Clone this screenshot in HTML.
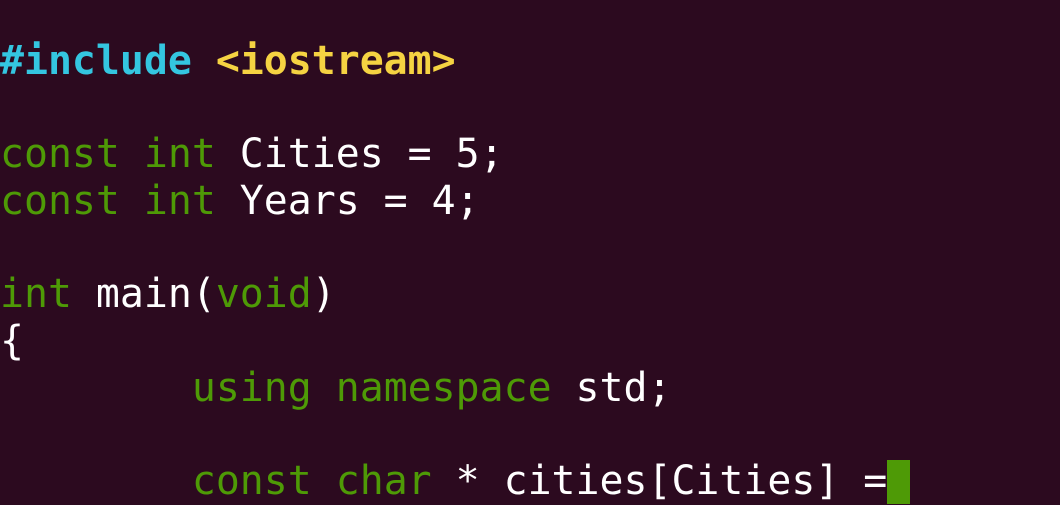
<!DOCTYPE html>
<html><head><meta charset="utf-8"><style>
html,body{margin:0;padding:0;background:#2c0a1f;width:1060px;height:503px;overflow:hidden}
pre{margin:0;position:absolute;left:0;top:38px;font-family:"DejaVu Sans Mono","Liberation Mono",monospace;font-size:39.85px;line-height:46.67px;color:#ffffff}
.c{color:#34c6e0;font-weight:bold}.y{color:#f5d342;font-weight:bold}.g{color:#4e9a06}
.cur{display:inline-block;width:23px;height:44px;background:#4e9a06;vertical-align:-10px}
</style></head><body>
<pre><span class="c">#include</span> <span class="y">&lt;iostream&gt;</span>

<span class="g">const</span> <span class="g">int</span> Cities = 5;
<span class="g">const</span> <span class="g">int</span> Years = 4;

<span class="g">int</span> main(<span class="g">void</span>)
{
        <span class="g">using</span> <span class="g">namespace</span> std;

        <span class="g">const</span> <span class="g">char</span> * cities[Cities] =<span class="cur"></span></pre>
</body></html>
